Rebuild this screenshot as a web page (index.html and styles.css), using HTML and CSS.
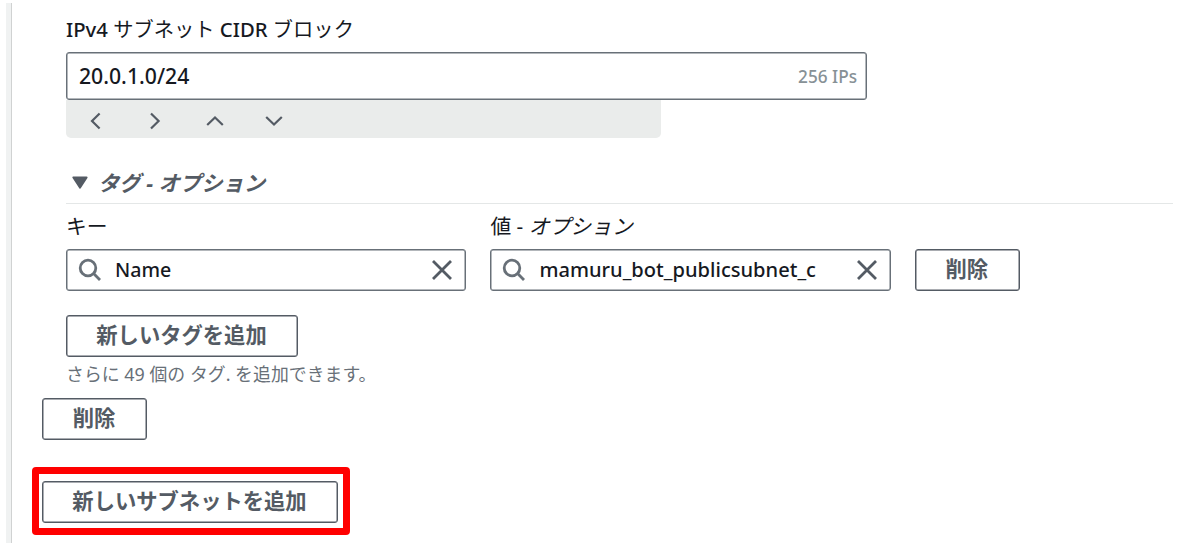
FILE: index.html
```html
<!DOCTYPE html>
<html lang="ja">
<head>
    <meta charset="UTF-8">
    <meta name="viewport" content="width=device-width, initial-scale=1.0">
    <title>サブネットを作成</title>
    <link rel="stylesheet" href="styles.css">
</head>
<body>
    <div class="panel">
        <div class="subnet">
            <label class="label cidr-label" for="cidr">IPv4 <span class="kana">サブネット</span> CIDR <span class="kana">ブロック</span></label>
            <div class="cidr-box" id="cidr">
                <span class="value cidr-value">20.0.1.0/24</span>
                <span class="ip-count">256 IPs</span>
            </div>
            <div class="cidr-nav">
                <svg class="arrow" viewBox="0 0 20 20"><path d="M13.6 2.5 L6 10 L13.6 17.5"/></svg>
                <svg class="arrow" viewBox="0 0 20 20"><path d="M6 2.5 L13.6 10 L6 17.5"/></svg>
                <svg class="arrow" viewBox="0 0 20 20"><path d="M2.2 14 L10 6.5 L17.8 14"/></svg>
                <svg class="arrow" viewBox="0 0 20 20"><path d="M2.2 6 L10 13.5 L17.8 6"/></svg>
            </div>

            <!-- tags -->
            <div class="tags-header">
                <svg class="caret" viewBox="0 0 16 13"><path d="M1.5 1.5 H14.5 L8 11.5 Z"/></svg>
                <span class="tags-title">タグ - <i>オプション</i></span>
            </div>
            <div class="tags-row">
                <div class="field">
                    <span class="label">キー</span>
                    <div class="search-box">
                        <svg class="search" viewBox="0 0 24 24"><circle cx="10" cy="10" r="7.8"/><path d="M15.6 15.6 L22 22"/></svg>
                        <span class="value key-value">Name</span>
                        <svg class="clear" viewBox="0 0 22 22"><path d="M2 2 L20 20 M20 2 L2 20"/></svg>
                    </div>
                </div>
                <div class="field">
                    <span class="label">値 - <i>オプション</i></span>
                    <div class="search-box">
                        <svg class="search" viewBox="0 0 24 24"><circle cx="10" cy="10" r="7.8"/><path d="M15.6 15.6 L22 22"/></svg>
                        <span class="value name-value">mamuru_bot_publicsubnet_c</span>
                        <svg class="clear" viewBox="0 0 22 22"><path d="M2 2 L20 20 M20 2 L2 20"/></svg>
                    </div>
                </div>
                <button class="btn btn-small">削除</button>
            </div>
            <button class="btn btn-tag">新しいタグを追加</button>
            <p class="hint">さらに 49 個の タグ. を追加できます。</p>
        </div>

        <button class="btn btn-small">削除</button>
        <div class="highlight">
            <button class="btn btn-subnet">新しいサブネットを追加</button>
        </div>
    </div>
</body>
</html>
```
FILE: styles.css
```css
* {
    box-sizing: border-box;
}
body {
    margin: 0;
    background-color: #fff;
    color: #16191f;
    font-family: "Noto Sans", "Noto Sans CJK JP", sans-serif;
    font-size: 20px;
}
/* left edge of the card */
.panel {
    display: flex;
    flex-direction: column;
    align-items: flex-start;
    width: 1167px;
    height: 540px;
    margin: 3px 0 0 6px;
    padding-left: 31px;
    border-left: 5px solid #f0f2f2;
    box-shadow: inset 1px 0 0 #d0d2d2;
}
.subnet {
    display: flex;
    flex-direction: column;
    align-items: flex-start;
    width: 1107px;
    height: 395px;
    margin-left: 24px;
}
.label {
    display: block;
    height: 32px;
    font-size: 20.8px;
    line-height: 32px;
    white-space: pre;
}
.cidr-label {
    height: 49px;
    padding-top: 10px;
    font-size: 20.3px;
    font-weight: 500;
}
.kana {
    font-weight: normal;
}
.value {
    font-size: 20.1px;
    font-weight: 500;
    line-height: 28px;
}

.cidr-box {
    display: flex;
    align-items: center;
    justify-content: space-between;
    width: 801px;
    height: 48px;
    padding: 0 9px 0 12px;
    border: 1px solid #687078;
    border-radius: 3px;
    box-shadow: inset 0 0 0 0.5px #687078;
}
.cidr-value {
    font-size: 21.2px;
}
.ip-count {
    color: #879196;
    font-size: 17.2px;
    font-weight: 500;
}
.cidr-nav {
    display: flex;
    align-items: center;
    gap: 39.3px;
    width: 595px;
    height: 38px;
    padding: 3px 0 0 20px;
    border-radius: 0 0 5px 5px;
    background-color: #eaeceb;
}
svg {
    flex: none;
    fill: none;
    stroke: #545b64;
    stroke-width: 2.2;
}
.arrow {
    width: 20px;
    height: 20px;
}

.tags-header {
    display: flex;
    align-items: center;
    width: 1107px;
    height: 66px;
    padding: 23px 0 0 6px;
    border-bottom: 1px solid #e4e7e7;
    color: #545b64;
    font-size: 21.3px;
    font-weight: bold;
    font-style: italic;
}
.tags-title {
    margin-top: -2px;
}
.caret {
    width: 16px;
    height: 13px;
    margin-right: 10px;
    fill: #545b64;
    stroke-linejoin: round;
}
.tags-row {
    display: flex;
    align-items: flex-end;
    gap: 24px;
    height: 87px;
}
.field {
    display: flex;
    flex-direction: column;
    gap: 7px;
}
.search-box {
    display: flex;
    align-items: center;
    width: 400.4px;
    height: 42px;
    padding: 0 11px;
    border: 1px solid #687078;
    border-radius: 3px;
    box-shadow: inset 0 0 0 0.5px #687078;
}
.search {
    width: 24px;
    height: 24px;
    margin-right: 13px;
    stroke: #687078;
    stroke-width: 2.8;
}
.clear {
    width: 22px;
    height: 22px;
    margin-right: 1px;
    margin-left: auto;
    stroke-width: 2.8;
}
.key-value {
    font-size: 19.6px;
}

.btn {
    height: 42px;
    padding: 0 1px 2px 0;
    border: 1px solid #545b64;
    border-radius: 3px;
    box-shadow: inset 0 0 0 0.5px #545b64;
    background-color: #fff;
    color: #545b64;
    font-family: inherit;
    font-size: 21.3px;
    font-weight: bold;
    line-height: 36px;
    white-space: nowrap;
}
.btn-small {
    width: 105px;
}
.btn-tag {
    width: 232px;
    margin-top: 24px;
}
.hint {
    margin: 2px 0 0;
    color: #687078;
    font-size: 17.9px;
    line-height: 30px;
}

/* red frame round the button */
.highlight {
    width: 318px;
    height: 68px;
    margin: 27px 0 0 -10px;
    padding: 7px 3px;
    border: 7px solid #f00;
    border-radius: 4px;
}
.btn-subnet {
    display: block;
    width: 296px;
}
```
